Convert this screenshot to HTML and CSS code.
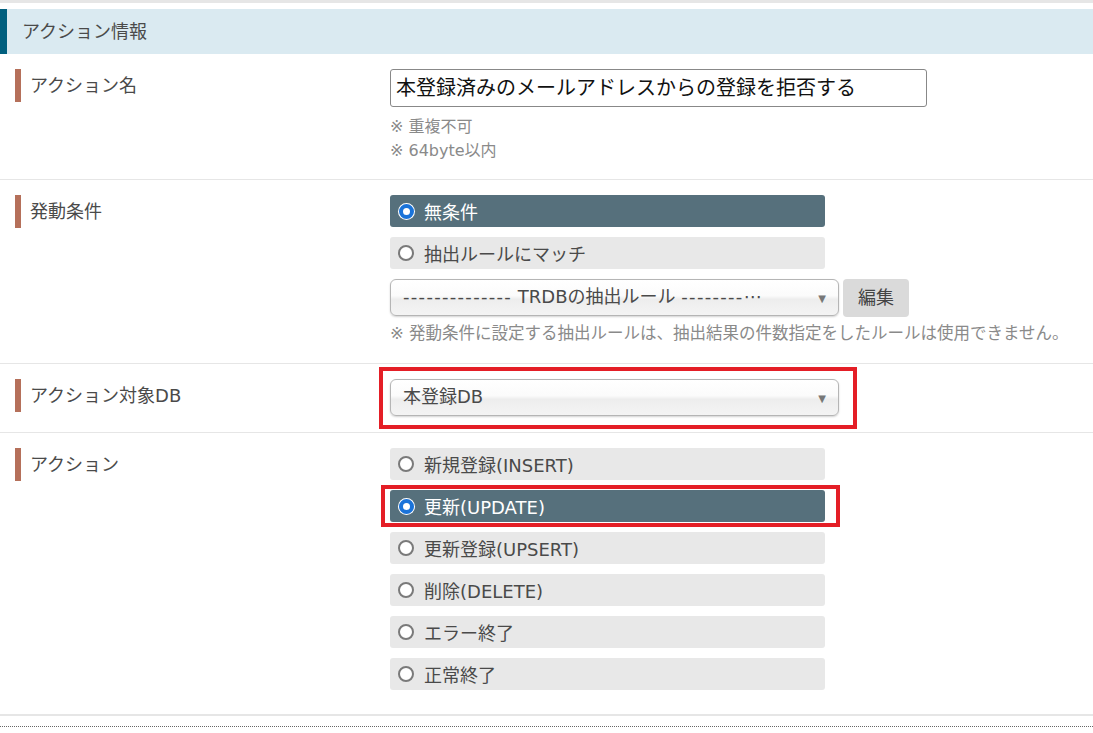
FILE: index.html
```html
<!DOCTYPE html>
<html>
<head>
    <title>アクション情報</title>
    <link rel="stylesheet" href="styles.css">
</head>
<body>
    <div class="top-line"></div>
    <h2 class="section-head">アクション情報</h2>

    <div class="form-row">
      <div class="label">アクション名</div>
      <div class="field">
        <div class="text-input">本登録済みのメールアドレスからの登録を拒否する</div>
        <p class="note">※ 重複不可</p>
        <p class="note">※ 64byte以内</p>
      </div>
    </div>

    <div class="form-row row-cond">
      <div class="label">発動条件</div>
      <div class="field">
        <div class="options">
          <div class="option checked"><span class="radio"></span>無条件</div>
          <div class="option"><span class="radio"></span>抽出ルールにマッチ</div>
        </div>
        <div class="select-line">
          <div class="select"><span class="dashes">--------------</span> TRDBの抽出ルール <span class="dashes">--------</span>⋯<span class="arrow">▼</span></div>
          <div class="button">編集</div>
        </div>
        <p class="note note-wide">※ 発動条件に設定する抽出ルールは、抽出結果の件数指定をしたルールは使用できません。</p>
      </div>
    </div>

    <div class="form-row">
      <div class="label">アクション対象DB</div>
      <div class="field">
        <div class="marked">
          <div class="select">本登録DB<span class="arrow">▼</span></div>
          <div class="red-box box-select"></div>
        </div>
      </div>
    </div>

    <div class="form-row row-last">
      <div class="label">アクション</div>
      <div class="field">
        <div class="options">
          <div class="option"><span class="radio"></span>新規登録(INSERT)</div>
          <div class="marked">
            <div class="option checked"><span class="radio"></span>更新(UPDATE)</div>
            <div class="red-box box-option"></div>
          </div>
          <div class="option"><span class="radio"></span>更新登録(UPSERT)</div>
          <div class="option"><span class="radio"></span>削除(DELETE)</div>
          <div class="option"><span class="radio"></span>エラー終了</div>
          <div class="option"><span class="radio"></span>正常終了</div>
        </div>
      </div>
    </div>
    <div class="dotted"></div>
</body>
</html>
```

FILE: styles.css
```css
* {
    box-sizing: border-box;
}

body {
    font-family: "DejaVu Sans", "Noto Sans CJK JP", sans-serif;
    margin: 0;
    color: #444;
}

.top-line {
    height: 3px;
    background: #e6e6e6;
}

.section-head {
    margin: 6px 0 0 0;
    height: 45px;
    line-height: 45px;
    background: #daeaf1;
    border-left: 7px solid #005f7e;
    padding-left: 15px;
    font-size: 18px;
    font-weight: normal;
    color: #4a4a4a;
}

.form-row {
    display: grid;
    grid-template-columns: 375px 1fr;
    padding: 15px 0 16px 15px;
    border-bottom: 1px solid #e6e6e6;
}

.row-cond {
    padding-bottom: 17px;
}

.row-last {
    padding-bottom: 24px;
    border-bottom: 2px solid #e6e6e6;
}

.label {
    border-left: 6px solid #b5705a;
    padding-left: 9px;
    height: 33px;
    line-height: 33px;
    font-size: 18px;
    color: #4a4a4a;
}

.field {
    min-width: 0;
}

.text-input {
    width: 537px;
    height: 38px;
    line-height: 36px;
    border: 1px solid #888;
    border-radius: 3px;
    padding-left: 5px;
    font-size: 20px;
    color: #111;
    white-space: nowrap;
}

.note {
    margin: 0;
    font-size: 16px;
    line-height: 24px;
    color: #8a8a8a;
    white-space: nowrap;
}

.text-input + .note {
    margin-top: 8px;
}

.note-wide {
    margin-top: 5px;
    font-size: 16.5px;
}

.options {
    display: flex;
    flex-direction: column;
    gap: 10px;
    width: 435px;
}

.option {
    display: flex;
    align-items: center;
    height: 32px;
    background: #e8e8e8;
    border-radius: 3px;
    padding-left: 8px;
    font-size: 18px;
    color: #4a4a4a;
    white-space: nowrap;
}

.option.checked {
    background: #56707c;
    color: #fff;
}

.radio {
    display: block;
    width: 16px;
    height: 16px;
    min-width: 16px;
    border: 2px solid #7a7a7a;
    border-radius: 50%;
    background: #fff;
    margin-right: 10px;
}

.checked .radio {
    width: 15px;
    height: 15px;
    min-width: 15px;
    margin-left: 1px;
    border: 4.5px solid #1a73d9;
    box-shadow: 0 0 0 1px #fff;
}

.select-line {
    display: flex;
    gap: 4px;
    margin-top: 10px;
}

.select {
    position: relative;
    width: 449px;
    height: 37px;
    line-height: 34px;
    border: 1px solid #b5b5b5;
    border-radius: 6px;
    background: linear-gradient(#ffffff 0%, #fbfbfb 45%, #ededed 55%, #f4f4f4 100%);
    box-shadow: 0 1px 2px rgba(0, 0, 0, 0.18);
    padding-left: 12px;
    font-size: 18px;
    color: #4a4a4a;
    white-space: nowrap;
}

.dashes {
    letter-spacing: 1.3px;
}

.arrow {
    position: absolute;
    right: 12px;
    top: 2px;
    font-size: 10px;
    color: #777;
}

.button {
    width: 66px;
    height: 38px;
    line-height: 38px;
    text-align: center;
    background: #dadada;
    border-radius: 4px;
    font-size: 18px;
    color: #444;
}

.marked {
    position: relative;
}

.field > .marked {
    width: 449px;
}

.red-box {
    position: absolute;
    border: 4px solid #e41e26;
}

.box-select {
    top: -12px;
    left: -11px;
    right: -18px;
    bottom: -13px;
}

.box-option {
    top: -5px;
    left: -9px;
    right: -15px;
    bottom: -5px;
}

.dotted {
    margin-top: 10px;
    border-top: 1px dotted #666;
}
```
